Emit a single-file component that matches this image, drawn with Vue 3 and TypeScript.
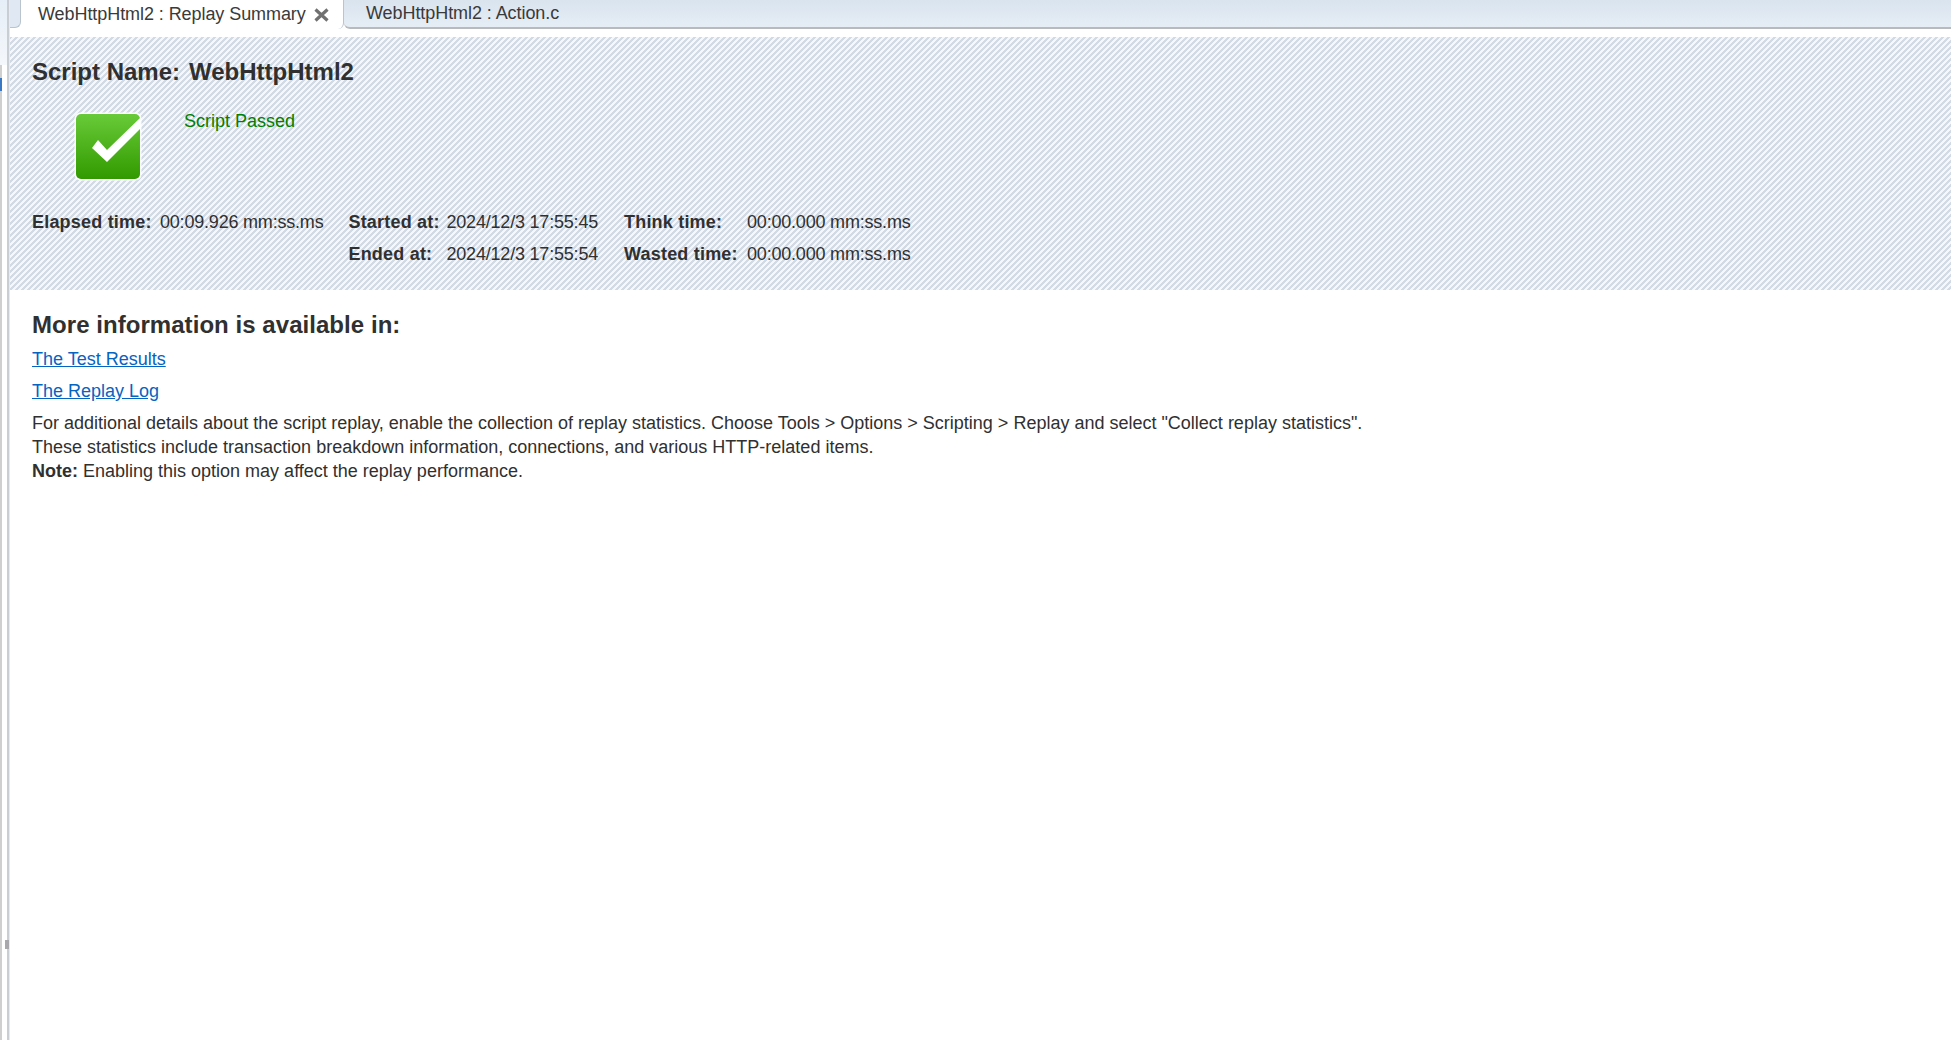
<template>
  <div class="page">
    <!-- 左侧分隔条 -->
    <div class="side">
      <div class="side-top"></div>
      <div class="side-mark"></div>
      <div class="side-handle"></div>
    </div>

    <div class="main">
      <!-- 标签栏 -->
      <div class="tabs">
        <div class="tab-start"></div>
        <div class="tab active">
          <span class="tab-text">WebHttpHtml2 : Replay Summary</span>
          <svg class="tab-close" width="15" height="14" viewBox="0 0 15 14">
            <path d="M1.5 1.5 L13.5 12.5 M13.5 1.5 L1.5 12.5" stroke="#707070" stroke-width="3.2" fill="none" />
          </svg>
        </div>
        <div class="tab">
          <span class="tab-text">WebHttpHtml2 : Action.c</span>
        </div>
      </div>

      <!-- 摘要区 -->
      <section class="summary">
        <h2 class="script-name"><span>Script Name:</span><span>WebHttpHtml2</span></h2>

        <div class="status">
          <svg class="status-icon" width="68" height="69" viewBox="0 0 68 69">
            <defs>
              <linearGradient id="passGrad" x1="0" y1="0" x2="0" y2="1">
                <stop offset="0" stop-color="#68ca38" />
                <stop offset="1" stop-color="#329a00" />
              </linearGradient>
              <clipPath id="passClip">
                <rect x="2" y="2" width="64" height="65" rx="5" />
              </clipPath>
            </defs>
            <rect x="0.5" y="0.5" width="67" height="68" rx="6" fill="#fff" opacity="0.9" />
            <rect x="2" y="2" width="64" height="65" rx="5" fill="url(#passGrad)" />
            <polygon clip-path="url(#passClip)" points="18,36 24,28 33,38 66,6 66,17 33,50" fill="#fff" />
          </svg>
          <span class="status-text">Script Passed</span>
        </div>

        <div class="times">
          <div class="time-grid elapsed">
            <b>Elapsed time:</b><span>00:09.926 mm:ss.ms</span>
          </div>
          <div class="time-grid started">
            <template v-for="row in dates" :key="row.label">
              <b>{{ row.label }}</b><span>{{ row.value }}</span>
            </template>
          </div>
          <div class="time-grid durations">
            <template v-for="row in durations" :key="row.label">
              <b>{{ row.label }}</b><span>{{ row.value }}</span>
            </template>
          </div>
        </div>
      </section>

      <!-- 更多信息 -->
      <section class="more">
        <h2 class="more-title">More information is available in:</h2>
        <a class="link" href="#">The Test Results</a>
        <a class="link" href="#">The Replay Log</a>
        <p class="note">
          For additional details about the script replay, enable the collection of replay statistics. Choose Tools &gt; Options &gt; Scripting &gt; Replay and select "Collect replay statistics".<br />
          These statistics include transaction breakdown information, connections, and various HTTP-related items.<br />
          <b>Note:</b> Enabling this option may affect the replay performance.
        </p>
      </section>
    </div>
  </div>
</template>

<script setup lang="ts">
const dates = [
  { label: 'Started at:', value: '2024/12/3 17:55:45' },
  { label: 'Ended at:', value: '2024/12/3 17:55:54' },
]

const durations = [
  { label: 'Think time:', value: '00:00.000 mm:ss.ms' },
  { label: 'Wasted time:', value: '00:00.000 mm:ss.ms' },
]
</script>

<style>
html, body {
  margin: 0;
  background: #fff;
}
</style>

<style scoped>
.page {
  display: flex;
  width: 100%;
  height: 1040px;
  overflow: hidden;
  background: #fff;
  font-family: 'Liberation Sans', Arial, sans-serif;
  color: #303030;
}

/* ===== 左侧 ===== */
.side {
  position: relative;
  flex: 0 0 10px;
  box-sizing: border-box;
  border-right: 1px solid #e4ebf3;
  background: linear-gradient(90deg, #cfcfcf 0, #cfcfcf 2px, #fff 2px, #fff 7px, #c9ced4 7px, #c9ced4 9px);
}

.side-top {
  position: absolute;
  top: 0;
  left: 0;
  width: 7px;
  height: 65px;
  background: linear-gradient(180deg, #e6eef7 0, #f4f7fb 100%);
}

.side-mark {
  position: absolute;
  top: 78px;
  left: 0;
  width: 2px;
  height: 13px;
  background: #3b78c4;
}

.side-handle {
  position: absolute;
  top: 940px;
  left: 5px;
  width: 4px;
  height: 9px;
  background: #a8a8ac;
}

.main {
  flex: 1;
  min-width: 0;
  display: flex;
  flex-direction: column;
}

/* ===== 标签栏 ===== */
.tabs {
  display: flex;
  flex: 0 0 37px;
  align-items: flex-start;
  background: #fff;
}

.tab-start {
  flex: 0 0 11px;
  height: 28px;
  box-sizing: border-box;
  border-right: 1px solid #b9c4cf;
  border-bottom: 1px solid #b9c4cf;
  border-bottom-right-radius: 6px;
  background: #dfe8f3;
}

.tab {
  display: flex;
  flex: 1;
  align-items: center;
  height: 29px;
  box-sizing: border-box;
  padding-left: 22px;
  border-bottom: 2px solid #b8bbbe;
  border-bottom-left-radius: 6px;
  font-size: 18px;
  letter-spacing: -0.07px;
  color: #3a3a3a;
  white-space: nowrap;
  background: linear-gradient(180deg, #d9e4ef 0, #e6edf5 100%);
}

.tab.active {
  flex: 0 0 323px;
  padding-left: 17px;
  border-bottom: 0;
  border-right: 1px solid #b9c4cf;
  border-radius: 0 0 6px 0;
  background: #fff;
}

.tab-close {
  margin-left: 8px;
}

/* ===== 摘要区 ===== */
.summary {
  flex: 0 0 253px;
  padding: 21px 0 0 22px;
  box-sizing: border-box;
  background-color: #f5f7fa;
  background-image: linear-gradient(135deg, #d2dae6 25%, #f5f7fa 25%, #f5f7fa 50%, #d2dae6 50%, #d2dae6 75%, #f5f7fa 75%);
  background-size: 6px 6px;
}

.script-name {
  display: flex;
  gap: 9px;
  margin: 0;
  font-size: 24px;
  line-height: 28px;
  font-weight: 700;
}

.status {
  display: flex;
  align-items: flex-start;
  margin: 26px 0 0 42px;
  height: 69px;
}

.status-text {
  margin: -2px 0 0 42px;
  font-size: 18px;
  line-height: 22px;
  color: #008000;
}

.times {
  display: flex;
  margin-top: 25px;
  font-size: 18px;
  line-height: 32px;
}

.times span {
  letter-spacing: -0.2px;
}

.times b {
  letter-spacing: 0.2px;
}

.time-grid {
  display: grid;
  align-content: start;
}

.elapsed {
  grid-template-columns: 128px auto;
  margin-right: 25px;
}

.started {
  grid-template-columns: 98px auto;
  margin-right: 26px;
}

.durations {
  grid-template-columns: 123px auto;
}

/* ===== 更多信息 ===== */
.more {
  padding: 0 0 0 22px;
}

.more-title {
  margin: 20px 0 0;
  font-size: 24px;
  line-height: 30px;
  font-weight: 700;
  letter-spacing: 0.05px;
}

.link {
  display: table;
  margin-top: 7px;
  font-size: 18px;
  line-height: 25px;
  color: #0563c1;
  text-decoration: underline;
}

.note {
  margin: 7px 0 0;
  font-size: 18px;
  line-height: 24px;
}
</style>
